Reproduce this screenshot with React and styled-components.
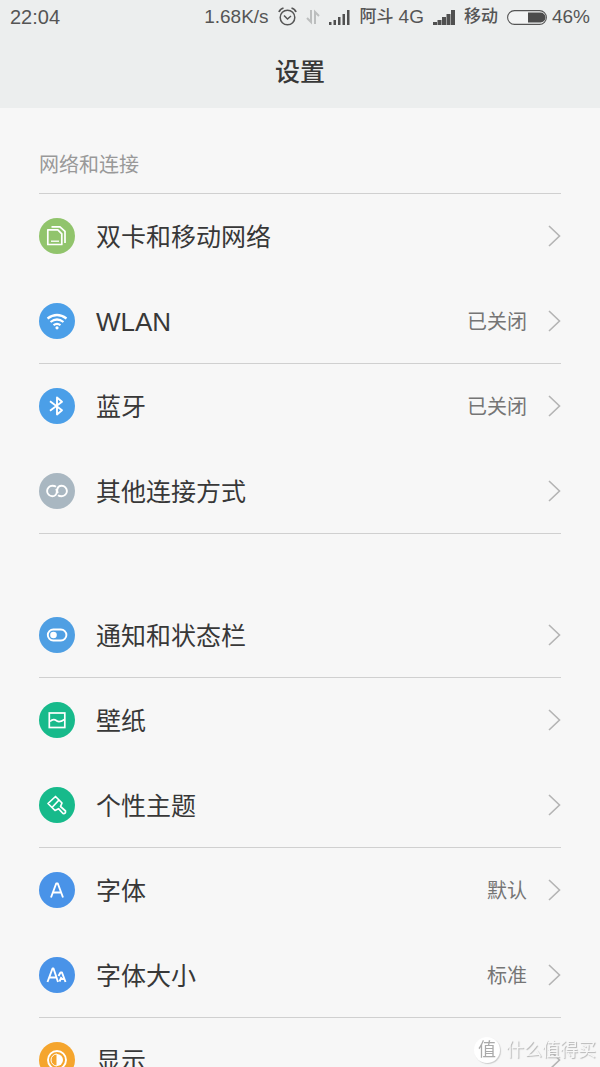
import React from "react";
import styled, { createGlobalStyle } from "styled-components";

const GlobalStyle = createGlobalStyle`
  * {
    box-sizing: border-box;
  }

  body {
    margin: 0;
    background: #f7f7f7;
    font-family: "Liberation Sans", "Noto Sans CJK SC", sans-serif;
  }
`;

const Screen = styled.div`
  display: flex;
  flex-direction: column;
  height: 100vh;
  overflow: hidden;
  color: #383838;
`;

const Header = styled.header`
  flex: none;
  background: #eceeee;
  padding-bottom: 15px;
`;

const StatusBar = styled.div`
  display: flex;
  align-items: center;
  justify-content: space-between;
  height: 34px;
  padding: 0 10px;
  color: #555;
  line-height: 24px;
`;

const Clock = styled.time`
  font-size: 20px;
`;

const StatusItems = styled.div`
  display: flex;
  align-items: center;
  gap: 9px;
  font-size: 19px;
`;

const StatusGroup = styled.span`
  display: flex;
  align-items: center;
  gap: 5px;
`;

const Carrier = styled.span`
  font-size: 17px;
  font-weight: 500;
`;

const Title = styled.h1`
  margin: 0;
  padding-top: 18px;
  text-align: center;
  font-size: 25px;
  font-weight: 500;
  line-height: 41px;
`;

const List = styled.main`
  flex: 1;
  min-height: 0;
  overflow-y: auto;
  scrollbar-width: none;
  padding: 37px 39px 0;
`;

const Section = styled.section`
  margin-bottom: 59px;
`;

const SectionTitle = styled.h2`
  margin: 0;
  padding-bottom: 8px;
  color: #999;
  font-size: 20px;
  font-weight: 400;
  line-height: 40px;
`;

const Group = styled.div`
  border-top: ${(props) => (props.$first ? "1px solid #d0d0d0" : "none")};
  border-bottom: 1px solid #d0d0d0;
`;

const Row = styled.a`
  display: flex;
  align-items: center;
  height: 84px;
  color: inherit;
  text-decoration: none;

  & + & {
    height: 85px;
  }
`;

const Badge = styled.span`
  display: flex;
  flex: none;
  width: 36px;
  height: 36px;
  margin-right: 21px;
  border-radius: 50%;
  background: ${(props) => props.$color};
`;

const Label = styled.span`
  flex: 1;
  padding-top: 2px;
  font-size: ${(props) => (props.$latin ? "26px" : "25px")};
  line-height: 36px;
`;

const Value = styled.span`
  margin-right: 21px;
  padding-top: 2px;
  color: #757575;
  font-size: 20px;
  line-height: 30px;
`;

const Watermark = styled.div`
  position: fixed;
  right: 4px;
  bottom: 4px;
  display: flex;
  align-items: center;
  gap: 6px;
  color: #f7f7f7;
  font-size: 18px;
  line-height: 26px;
  text-shadow: 1px 1px 1px #b4b4b4;
`;

const Seal = styled.span`
  width: 26px;
  height: 26px;
  border-radius: 50%;
  background: #fff;
  box-shadow: 1px 1px 1px #ccc;
  color: #aaa;
  font-size: 18px;
  text-align: center;
  text-shadow: none;
`;

function Glyph({ children }) {
  return (
    <svg
      width="36"
      height="36"
      viewBox="0 0 36 36"
      fill="none"
      stroke="#fff"
      strokeWidth="1.7"
      strokeLinejoin="round"
      aria-hidden="true"
    >
      {children}
    </svg>
  );
}

const icons = {
  sim: (
    <Glyph>
      <path d="M8.800 11.800h10l4 4v10.700h-14z" />
      <path d="M12.500 8.800h8.500l5 4.500V25" />
      <path d="M12 23.200h8" strokeWidth="1.300" />
    </Glyph>
  ),
  wifi: (
    <Glyph>
      <path
        d="M8.500 15.500q9.500-7 19 0M11.500 19q6.500-5 13 0M14.500 22.200q3.500-2.600 7 0"
        strokeWidth="2.200"
      />
      <circle cx="18" cy="24.800" r="1.600" fill="#fff" stroke="none" />
    </Glyph>
  ),
  bluetooth: (
    <Glyph>
      <path d="M11 13.200l12 9-5 4.300V9.500l5 4.300-12 9" strokeWidth="1.900" />
    </Glyph>
  ),
  link: (
    <Glyph>
      <path
        d="M17 13.800c-1-.8-2.300-1-3.700-1a5.200 5.200 0 0 0 0 10.400c2.500 0 4.200-1.700 4.500-4.200q.2-1.700-.8-3"
        strokeWidth="1.900"
      />
      <path
        d="M19 22.200c1 .8 2.300 1 3.700 1a5.200 5.200 0 0 0 0-10.400c-2.500 0-4.200 1.700-4.500 4.200q-.2 1.700.8 3"
        strokeWidth="1.900"
      />
    </Glyph>
  ),
  toggle: (
    <Glyph>
      <rect x="8.800" y="12.500" width="18.600" height="11" rx="5.500" strokeWidth="1.900" />
      <circle cx="14.500" cy="18" r="3.300" fill="#fff" stroke="none" />
    </Glyph>
  ),
  wallpaper: (
    <Glyph>
      <rect x="10.300" y="11" width="15.500" height="14.500" strokeLinejoin="miter" />
      <path d="M11 19.500c3.500-3.500 5.500-1.500 7-.5s3.500 1 7.500-1.500" />
    </Glyph>
  ),
  brush: (
    <Glyph>
      <path d="M16.500 9.500l6.500 6.500-1.500 3.500 5 4.500q.3 3-2.500 2.500l-4.500-4.800-3.500 1.800-7-7z" />
      <path d="M20 13l-7 7.500" />
    </Glyph>
  ),
  font: (
    <Glyph>
      <path d="M12 25.500L17.200 11.500h1.600L24 25.500M14 20.500h8" strokeWidth="1.900" />
    </Glyph>
  ),
  fontSize: (
    <Glyph>
      <path d="M8.500 25L13.500 11.500h1L19 25M10.500 20.500h7" strokeWidth="1.900" />
      <path d="M19.500 19l2-3.500h1.500L26.500 25M20.500 24.500l2-4.500M21 22h4" strokeWidth="1.900" />
    </Glyph>
  ),
  display: (
    <Glyph>
      <circle cx="18" cy="18" r="9" strokeWidth="1.900" />
      <path d="M18 12a6 6 0 0 1 0 12z" fill="#fff" stroke="none" />
      <path d="M18 12a6 6 0 0 0 0 12z" strokeWidth="1" />
    </Glyph>
  ),
};

function Chevron() {
  return (
    <svg
      width="13"
      height="22"
      viewBox="0 0 13 22"
      fill="none"
      stroke="#b4b4b4"
      strokeWidth="1.600"
      aria-hidden="true"
    >
      <path d="M1 1l10.500 10L1 21" />
    </svg>
  );
}

function AlarmIcon() {
  return (
    <svg
      width="19"
      height="20"
      viewBox="0 0 19 20"
      fill="none"
      stroke="#555"
      strokeWidth="1.500"
      aria-hidden="true"
    >
      <circle cx="9.500" cy="10.500" r="7.300" />
      <path d="M6 8.500l3.500 3.500 3.500-3" />
      <path d="M1 5q1-3 4.500-4M18 5q-1-3-4.500-4" strokeWidth="1.800" />
    </svg>
  );
}

function TransferIcon() {
  return (
    <svg
      width="14"
      height="16"
      viewBox="0 0 14 16"
      fill="none"
      stroke="#bcbebe"
      strokeWidth="2"
      aria-hidden="true"
    >
      <path d="M5 1v12L1 9M9 15V3l4 4" />
    </svg>
  );
}

function SignalIcon({ bold }) {
  const width = bold ? 4 : 2.5;
  return (
    <svg width="22" height="15" viewBox="0 0 22 15" fill="#505050" aria-hidden="true">
      {[3, 5, 8, 11, 15].map((height, i) => (
        <rect key={height} x={i * 4.5} y={15 - height} width={width} height={height} />
      ))}
    </svg>
  );
}

function BatteryIcon() {
  return (
    <svg width="40" height="15" viewBox="0 0 40 15" aria-hidden="true">
      <rect
        x="0.600"
        y="0.600"
        width="38.800"
        height="13.800"
        rx="6.900"
        fill="#f3f4f4"
        stroke="#555"
        strokeWidth="1.100"
      />
      <path d="M21 2.500h12.500a5 5 0 0 1 0 10H21z" fill="#4c4c4c" />
    </svg>
  );
}

const sections = [
  {
    id: "network",
    title: "网络和连接",
    groups: [
      [
        { id: "sim", label: "双卡和移动网络", color: "#91c46c" },
        { id: "wifi", label: "WLAN", latin: true, color: "#4b9fe8", value: "已关闭" },
      ],
      [
        { id: "bluetooth", label: "蓝牙", color: "#4b9fe8", value: "已关闭" },
        { id: "link", label: "其他连接方式", color: "#a9b7c1" },
      ],
    ],
  },
  {
    id: "personal",
    groups: [
      [{ id: "toggle", label: "通知和状态栏", color: "#4f9fe3" }],
      [
        { id: "wallpaper", label: "壁纸", color: "#17ba8b" },
        { id: "brush", label: "个性主题", color: "#17ba8b" },
      ],
      [
        { id: "font", label: "字体", color: "#4993e8", value: "默认" },
        { id: "fontSize", label: "字体大小", color: "#4993e8", value: "标准" },
      ],
      [{ id: "display", label: "显示", color: "#f5a52d" }],
    ],
  },
];

function App() {
  return (
    <Screen>
      <GlobalStyle />
      <Header>
        <StatusBar>
          <Clock>22:04</Clock>
          <StatusItems>
            <span>1.68K/s</span>
            <AlarmIcon />
            <TransferIcon />
            <SignalIcon />
            <StatusGroup>
              <Carrier>阿斗</Carrier>
              <span>4G</span>
            </StatusGroup>
            <SignalIcon bold />
            <Carrier>移动</Carrier>
            <StatusGroup>
              <BatteryIcon />
              <span>46%</span>
            </StatusGroup>
          </StatusItems>
        </StatusBar>
        <Title>设置</Title>
      </Header>
      <List>
        {sections.map((section) => (
          <Section key={section.id}>
            {section.title && <SectionTitle>{section.title}</SectionTitle>}
            {section.groups.map((rows, index) => (
              <Group key={rows[0].id} $first={Boolean(section.title) && index === 0}>
                {rows.map((row) => (
                  <Row key={row.id} href={`#${row.id}`}>
                    <Badge $color={row.color}>{icons[row.id]}</Badge>
                    <Label $latin={row.latin}>{row.label}</Label>
                    {row.value && <Value>{row.value}</Value>}
                    <Chevron />
                  </Row>
                ))}
              </Group>
            ))}
          </Section>
        ))}
      </List>
      <Watermark>
        <Seal>值</Seal>
        <span>什么值得买</span>
      </Watermark>
    </Screen>
  );
}

export default App;
